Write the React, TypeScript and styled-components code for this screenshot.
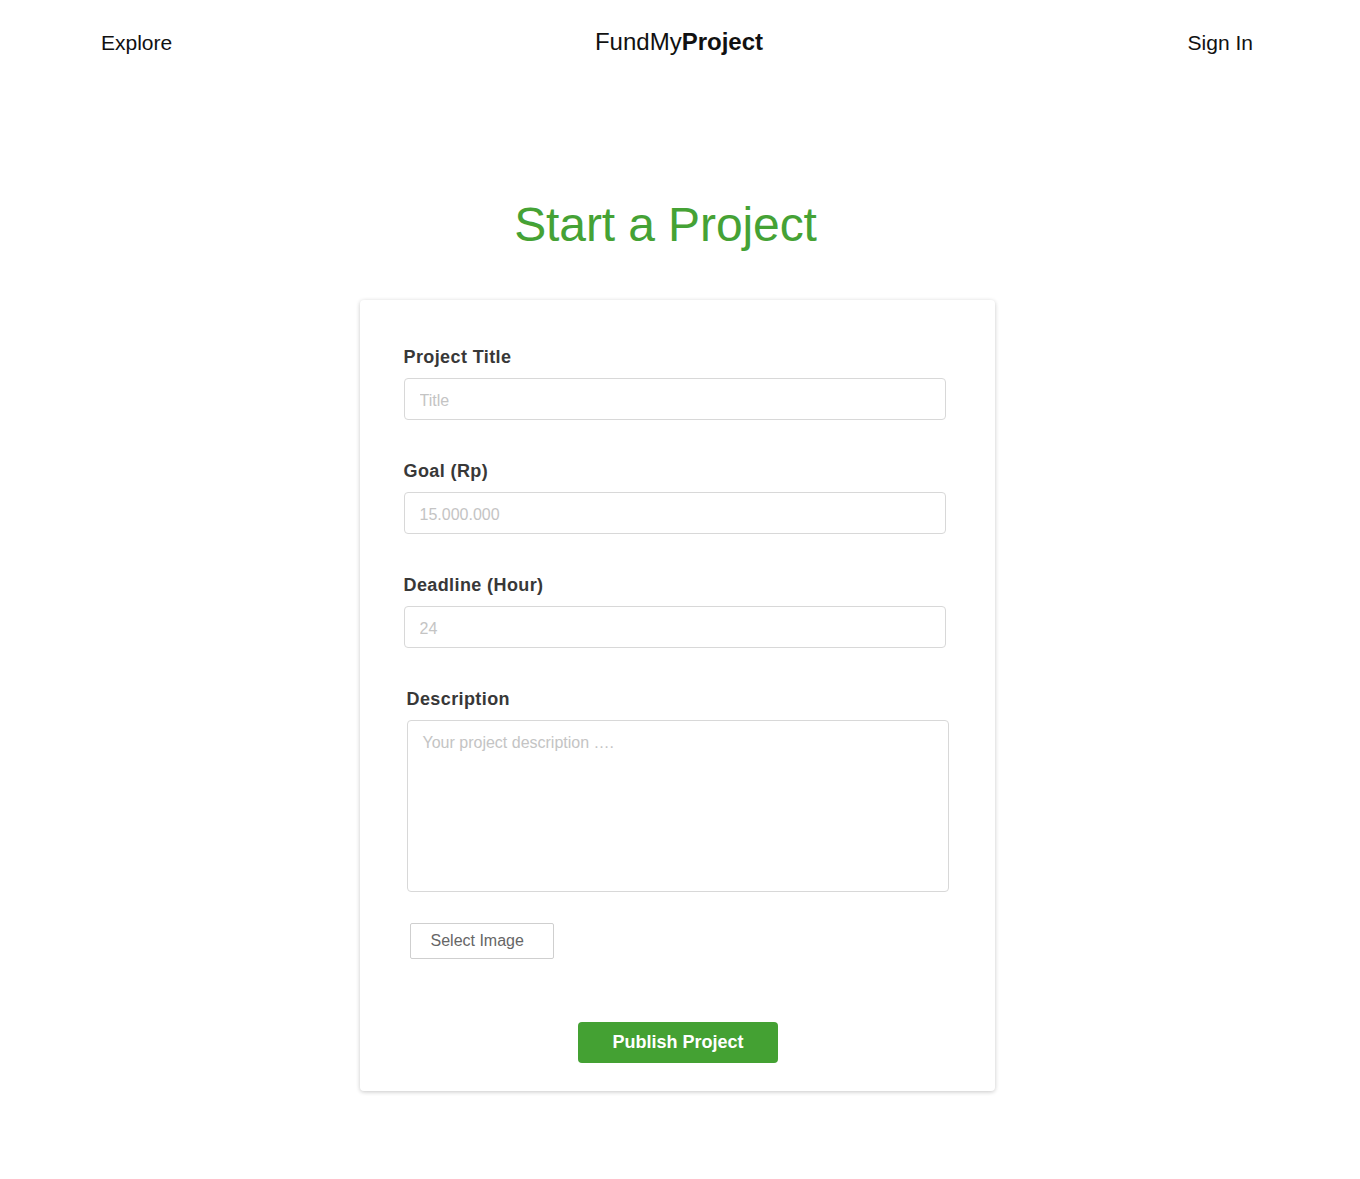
import React from "react";
import styled, { createGlobalStyle } from "styled-components";

const GlobalStyle = createGlobalStyle`
  html, body { margin: 0; padding: 0; background: #ffffff; }
  body { font-family: "Liberation Sans", Arial, sans-serif; color: #111; }
  * { box-sizing: border-box; }
`;

const Page = styled.div`
  display: flex;
  flex-direction: column;
  align-items: center;
  min-height: 1179px;
`;

const Nav = styled.header`
  width: 100%;
  height: 86px;
  padding: 0 107px 0 101px;
  display: flex;
  align-items: center;
  justify-content: space-between;
`;

const NavLink = styled.a<{ $align?: string }>`
  font-size: 21px;
  color: #111;
  text-decoration: none;
  width: 160px;
  text-align: ${(p) => p.$align || "left"};
  cursor: pointer;
`;

const Logo = styled.div`
  font-size: 24px;
  color: #111;
  font-weight: 400;
  margin: -2px 0 0 4px;
  b { font-weight: 700; }
`;

const Title = styled.h1`
  margin: 110px 29px 0 0;
  font-size: 48px;
  line-height: 58px;
  font-weight: 300;
  color: #45a235;
  text-align: center;
  letter-spacing: -0.1px;
`;

const Card = styled.form`
  margin: 46px 6px 0 0;
  width: 635px;
  padding: 47px 49px 28px 44px;
  background: #fff;
  border-radius: 4px;
  box-shadow: 0 1px 4px rgba(0, 0, 0, 0.22);
  display: flex;
  flex-direction: column;
`;

const Field = styled.div<{ $shift?: number; $gap?: number }>`
  display: flex;
  flex-direction: column;
  gap: 11px;
  margin-left: ${(p) => p.$shift || 0}px;
  margin-right: ${(p) => -(p.$shift || 0)}px;
  margin-bottom: ${(p) => p.$gap ?? 41}px;
`;

const Label = styled.label`
  font-size: 18px;
  line-height: 20px;
  font-weight: 700;
  color: #383838;
  letter-spacing: 0.4px;
`;

const Input = styled.input`
  height: 42px;
  width: 100%;
  border: 1px solid #d8d8d8;
  border-radius: 4px;
  padding: 3px 15px 0;
  font-family: "Liberation Sans", Arial, sans-serif;
  font-size: 16px;
  color: #333;
  outline: none;
  &::placeholder { color: #c4c4c4; }
`;

const TextArea = styled.textarea`
  height: 172px;
  width: 100%;
  border: 1px solid #d8d8d8;
  border-radius: 4px;
  padding: 12px 15px;
  font-family: "Liberation Sans", Arial, sans-serif;
  font-size: 16px;
  line-height: 19px;
  color: #333;
  resize: none;
  outline: none;
  &::placeholder { color: #c4c4c4; }
`;

const SelectButton = styled.button`
  align-self: flex-start;
  margin-left: 6px;
  width: 144px;
  height: 36px;
  padding: 0 0 0 20px;
  text-align: left;
  background: #fff;
  border: 1px solid #cfcfcf;
  border-radius: 2px;
  font-family: "Liberation Sans", Arial, sans-serif;
  font-size: 16px;
  color: #666;
  cursor: pointer;
`;

const PublishButton = styled.button`
  align-self: center;
  margin: 63px 0 0 7px;
  width: 200px;
  height: 41px;
  background: #44a133;
  border: none;
  border-radius: 4px;
  color: #fff;
  font-family: "Liberation Sans", Arial, sans-serif;
  font-size: 18px;
  font-weight: 700;
  cursor: pointer;
`;

export default function App() {
  return (
    <>
      <GlobalStyle />
      <Page>
        <Nav>
          <NavLink>Explore</NavLink>
          <Logo>
            FundMy<b>Project</b>
          </Logo>
          <NavLink $align="right">Sign In</NavLink>
        </Nav>
        <Title>Start a Project</Title>
        <Card onSubmit={(e) => e.preventDefault()}>
          <Field>
            <Label>Project Title</Label>
            <Input placeholder="Title" />
          </Field>
          <Field>
            <Label>Goal (Rp)</Label>
            <Input placeholder="15.000.000" />
          </Field>
          <Field>
            <Label>Deadline (Hour)</Label>
            <Input placeholder="24" />
          </Field>
          <Field $shift={3} $gap={31}>
            <Label>Description</Label>
            <TextArea placeholder="Your project description …." />
          </Field>
          <SelectButton type="button">Select Image</SelectButton>
          <PublishButton type="submit">Publish Project</PublishButton>
        </Card>
      </Page>
    </>
  );
}
